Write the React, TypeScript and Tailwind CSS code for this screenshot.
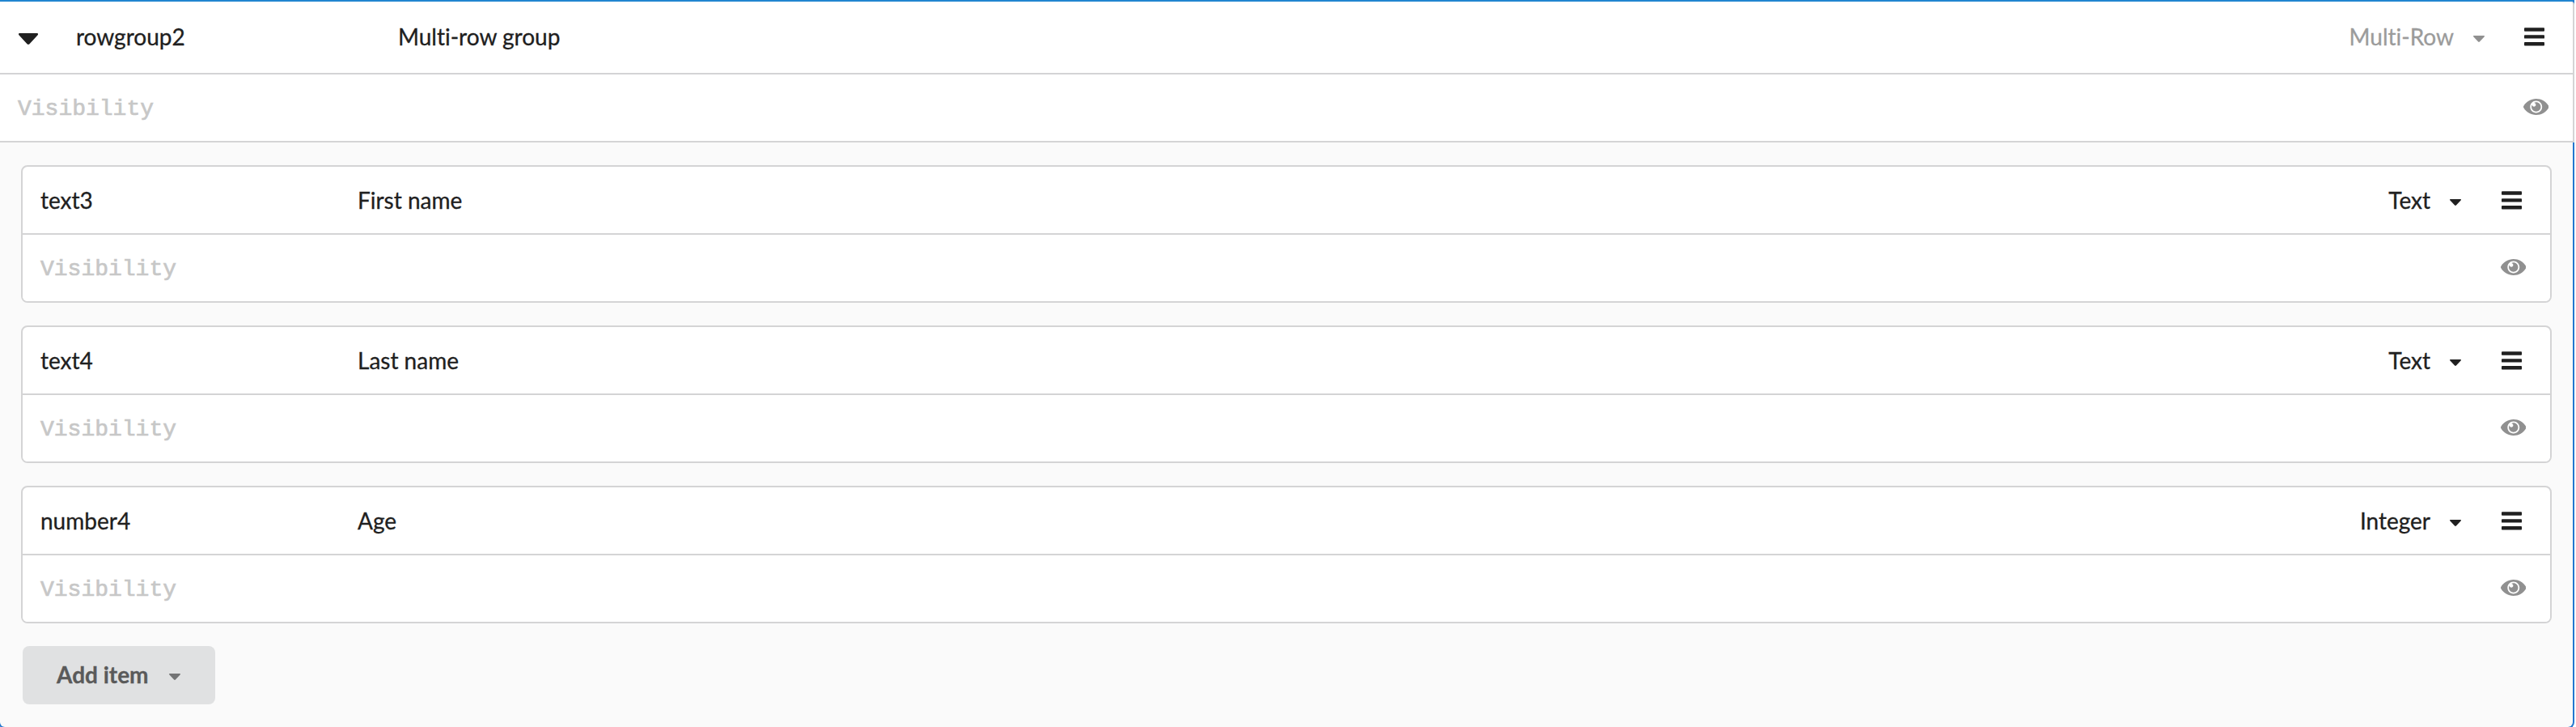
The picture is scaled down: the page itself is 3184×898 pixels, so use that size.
function Caret({ className }: { className: string }) {
  return (
    <svg viewBox="0 0 14 8" preserveAspectRatio="none" className={`shrink-0 ${className}`} fill="currentColor">
      <path d="M.7 0h12.6c.7 0 .9.8.5 1.3L7.9 7.5c-.5.6-1.3.6-1.8 0L.2 1.3C-.2.8 0 0 .7 0z" />
    </svg>
  );
}

function Bars() {
  return (
    <svg viewBox="0 0 25 23" className="mt-[1px] h-[23px] w-[25px] shrink-0 text-[#202020]" fill="currentColor">
      <rect x="0" y="0.3" width="25" height="4.4" rx="0.9" />
      <rect x="0" y="9.2" width="25" height="4.4" rx="0.9" />
      <rect x="0" y="18" width="25" height="4.4" rx="0.9" />
    </svg>
  );
}

function Eye() {
  return (
    <svg viewBox="0 0 576 512" className="mb-[3px] h-[28px] w-[31.5px] shrink-0 text-[#909090]" fill="currentColor">
      <path d="M569.354 231.631C512.969 135.949 407.81 72 288 72 168.14 72 63.004 135.994 6.646 231.631a47.999 47.999 0 0 0 0 48.739C63.031 376.051 168.19 440 288 440c119.86 0 224.996-63.994 281.354-159.631a47.997 47.997 0 0 0 0-48.738zM288 392c-75.162 0-136-60.827-136-136 0-75.162 60.826-136 136-136 75.162 0 136 60.826 136 136 0 75.162-60.826 136-136 136zm104-136c0 57.438-46.562 104-104 104s-104-46.562-104-104c0-17.708 4.431-34.379 12.236-48.973l-.001.032c0 23.651 19.173 42.823 42.824 42.823s42.824-19.173 42.824-42.823c0-23.651-19.173-42.824-42.824-42.824l-.032.001C253.621 156.431 270.292 152 288 152c57.438 0 104 46.562 104 104z" />
    </svg>
  );
}

function Visibility({ className }: { className: string }) {
  return (
    <div className={`flex h-[82px] items-center justify-between bg-white ${className}`}>
      <span className="mt-[3px] font-['Liberation_Mono','Courier_New',monospace] text-[28px] leading-none text-[#c7c7c7] [-webkit-text-stroke:0.7px]">
        Visibility
      </span>
      <Eye />
    </div>
  );
}

const items = [
  { key: "text3", label: "First name", type: "Text" },
  { key: "text4", label: "Last name", type: "Text" },
  { key: "number4", label: "Age", type: "Integer" },
];

export default function App() {
  return (
    <div className="h-[898px] w-[3184px] overflow-hidden bg-white font-['Lato',sans-serif] text-[28px] leading-[40px] text-[#202020] [-webkit-text-stroke:0.3px] [font-variant-ligatures:none]">
      <div className="-ml-[2px] flex h-[900px] w-[3184px] flex-col rounded-b-[8px] border-2 border-[#2477cf] border-t-[#2185d0] bg-[#fafafa]">
        <div className="-mr-[2px] shrink-0 rounded-tr-[4px] border-r-2 border-[#d4d4d5] bg-white">
          <div className="flex h-[90px] items-center border-b-2 border-[#d4d4d5] pr-[35px] pb-[2px] pl-[23px]">
            <Caret className="mt-[6px] h-[14px] w-[24px]" />
            <span className="ml-[47px] w-[398px]">rowgroup2</span>
            <span>Multi-row group</span>
            <span className="mr-[24px] ml-auto text-[#9b9b9b]">Multi-Row</span>
            <Caret className="mt-[6px] mr-[49px] h-[8px] w-[14px] text-[#909090]" />
            <Bars />
          </div>
          <div className="border-b-2 border-[#d4d4d5]">
            <Visibility className="pr-[30px] pl-[22px]" />
          </div>
        </div>
        <div className="flex flex-1 flex-col gap-[28px] px-[26px] pt-[28px]">
          {items.map((item) => (
            <div key={item.key} className="h-[170px] shrink-0 overflow-hidden rounded-[8px] border-2 border-[#d4d4d5] bg-white">
              <div className="flex h-[84px] items-center border-b-2 border-[#d4d4d5] pr-[35px] pl-[22px]">
                <span className="w-[392px]">{item.key}</span>
                <span>{item.label}</span>
                <span className="mr-[24px] ml-auto">{item.type}</span>
                <Caret className="mt-[6px] mr-[50px] h-[8px] w-[14px]" />
                <Bars />
              </div>
              <Visibility className="pr-[30px] pl-[22px]" />
            </div>
          ))}
          <button className="ml-[2px] flex h-[72px] w-[238px] shrink-0 items-center rounded-[8px] bg-[#e0e1e2] pb-[2px] pl-[42px] font-bold text-[#5a5a5a]">
            Add item
            <Caret className="mt-[6px] ml-[25px] h-[8px] w-[14px] text-[#737475]" />
          </button>
        </div>
      </div>
    </div>
  );
}
